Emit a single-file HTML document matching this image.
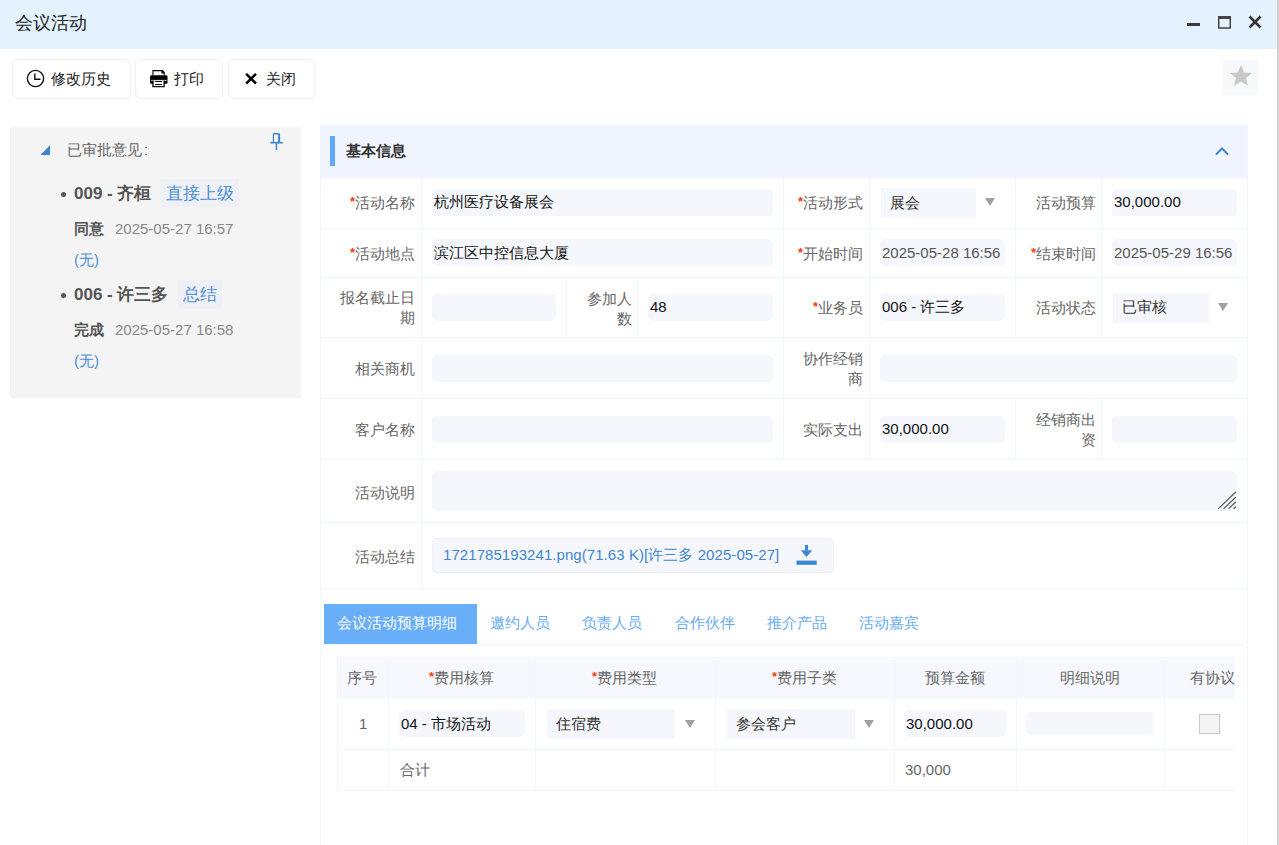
<!DOCTYPE html>
<html><head><meta charset="utf-8">
<style>
*{box-sizing:border-box;margin:0;padding:0}
html,body{width:1279px;height:845px;overflow:hidden;background:#fff;font-family:"Liberation Sans",sans-serif;color:#333;position:relative}
.a{position:absolute}
.tb{left:0;top:0;width:1279px;height:49px;background:#e3f2fe}
.ttl{left:15px;top:11px;font-size:18px;line-height:24px;color:#222}
.btn{top:59px;height:40px;border:1px solid #efefef;border-radius:6px;background:#fff}
.btxt{top:69px;font-size:15px;line-height:20px;color:#222}
.lp{left:10px;top:127px;width:291px;height:271px;background:#f4f4f5}
.lbl{font-size:15px;line-height:20px;color:#666;text-align:right;white-space:nowrap}
.req{color:#ff3a0a;font-size:13px;font-weight:bold;vertical-align:top;position:relative;top:0px;line-height:18px}
.inp{background:#f5f7fc;border-radius:5px;height:27px}
.val{font-size:15px;line-height:20px;color:#111;white-space:nowrap}
.hl{height:1px;background:#f1f5fd}
.vl{width:1px;background:#f1f5fd}
.sel{background:#f5f7fc;height:31px}
.tri{width:0;height:0;border-left:5px solid transparent;border-right:5px solid transparent;border-top:8px solid #a0a0a0}
.tab{top:604px;height:40px;font-size:15px;line-height:20px;color:#66acf5;padding-top:9px}
</style></head><body>
<!-- title bar -->
<div class="a tb"></div>
<div class="a ttl">会议活动</div>
<div class="a" style="left:1187px;top:23px;width:13px;height:3px;background:#3a3a3a"></div>
<svg class="a" style="left:1217px;top:15px" width="15" height="15" viewBox="0 0 15 15"><rect x="1.75" y="2" width="11.5" height="11" fill="none" stroke="#444" stroke-width="1.5"/><rect x="1" y="1" width="13" height="3" fill="#444"/></svg>
<svg class="a" style="left:1248px;top:15px" width="14" height="14" viewBox="0 0 14 14"><path d="M1.5 1.5L12.5 12.5M12.5 1.5L1.5 12.5" stroke="#333" stroke-width="2.6"/></svg>

<!-- toolbar -->
<div class="a btn" style="left:12px;width:119px"></div>
<svg class="a" style="left:26px;top:69px" width="19" height="19" viewBox="0 0 19 19"><circle cx="9.5" cy="9.5" r="8.1" fill="none" stroke="#111" stroke-width="1.4"/><path d="M8.8 4.5V10.3H14.5" fill="none" stroke="#111" stroke-width="1.4"/></svg>
<div class="a btxt" style="left:51px">修改历史</div>
<div class="a btn" style="left:135px;width:88px"></div>
<svg class="a" style="left:145px;top:66px" width="27" height="26" viewBox="0 0 27 26"><rect x="5.1" y="9.2" width="17.4" height="8.6" rx="1.3" fill="#000"/><rect x="6.2" y="13.9" width="15.3" height="0.9" fill="#fff"/><path d="M8 14.8V20.6H19.1V14.8Z" fill="#fff"/><path d="M8 14.6V20.6H19.1V14.6" fill="none" stroke="#000" stroke-width="1.3"/><path d="M10.2 15.5H16.9M10.2 18.5H16.9" stroke="#000" stroke-width="1"/><path d="M7.4 9.3V4.1H17.6L19.8 6.3V9.3H18.7V7.4H16.4V5.2H8.5V9.3Z" fill="#000"/></svg>
<div class="a btxt" style="left:174px">打印</div>
<div class="a btn" style="left:228px;width:87px"></div>
<svg class="a" style="left:244px;top:72px" width="14" height="13" viewBox="0 0 14 13"><path d="M2.2 1.8L12 11.5M12 1.8L2.2 11.5" stroke="#000" stroke-width="2.5"/></svg>
<div class="a btxt" style="left:266px">关闭</div>
<div class="a" style="left:1223px;top:60px;width:35px;height:35px;background:#f7f8fa"></div>
<svg class="a" style="left:1229px;top:64px" width="24" height="24" viewBox="0 0 24 24"><path d="M12 1l3.2 7.4 7.8.6-6 5.1 1.9 7.7L12 17.6l-6.9 4.2 1.9-7.7-6-5.1 7.8-.6z" fill="#c8c8c8"/></svg>

<!-- left panel -->
<div class="a lp"></div>
<div class="a tri" style="left:41px;top:146px;border:0;width:9px;height:9px;background:linear-gradient(135deg,transparent 50%,#3a86d0 50%)"></div>
<div class="a" style="left:67px;top:140px;font-size:15px;line-height:20px;color:#666">已审批意见<span style="margin-left:2px">:</span></div>
<svg class="a" style="left:269px;top:132px" width="15" height="20" viewBox="0 0 15 20"><path d="M3.8 10.2V2.6Q3.8 1.1 5.3 1.1H9.6Q11.1 1.1 11.1 2.6V10.2H9.1V2.6H5V10.2Z" fill="#3a86d0"/><rect x="1" y="9.9" width="13" height="1.5" rx=".7" fill="#3a86d0"/><rect x="6.7" y="10.5" width="1.5" height="7.8" rx=".7" fill="#3a86d0"/></svg>

<div class="a" style="left:61px;top:192px;width:5px;height:5px;border-radius:50%;background:#555"></div>
<div class="a" style="left:74px;top:184px;font-size:17px;line-height:20px;font-weight:bold;color:#555">009 - 齐桓</div>
<div class="a" style="left:160px;top:179px;width:79px;height:28px;background:#eef0f5;font-size:17px;line-height:29px;color:#4a8fd6;padding-left:6px">直接上级</div>
<div class="a" style="left:74px;top:219px;font-size:15px;line-height:20px;font-weight:bold;color:#555">同意</div>
<div class="a" style="left:115px;top:219px;font-size:15px;line-height:20px;color:#888">2025-05-27 16:57</div>
<div class="a" style="left:74px;top:250px;font-size:15px;line-height:20px;color:#4a8fd6">(无)</div>

<div class="a" style="left:61px;top:293px;width:5px;height:5px;border-radius:50%;background:#555"></div>
<div class="a" style="left:74px;top:285px;font-size:17px;line-height:20px;font-weight:bold;color:#555">006 - 许三多</div>
<div class="a" style="left:178px;top:280px;width:44px;height:29px;background:#eef0f5;font-size:17px;line-height:29px;color:#4a8fd6;padding-left:5px">总结</div>
<div class="a" style="left:74px;top:320px;font-size:15px;line-height:20px;font-weight:bold;color:#555">完成</div>
<div class="a" style="left:115px;top:320px;font-size:15px;line-height:20px;color:#888">2025-05-27 16:58</div>
<div class="a" style="left:74px;top:351px;font-size:15px;line-height:20px;color:#4a8fd6">(无)</div>

<!-- main panel -->
<div class="a" style="left:320px;top:125px;width:927px;height:53px;background:#eff4fe"></div>
<div class="a" style="left:330px;top:136px;width:5px;height:30px;background:#62a8f8"></div>
<div class="a" style="left:346px;top:141px;font-size:15px;line-height:20px;font-weight:bold;color:#333">基本信息</div>
<svg class="a" style="left:1214px;top:145px" width="16" height="12" viewBox="0 0 16 12"><path d="M2 9.5L8 3.5L14 9.5" stroke="#3a86d0" stroke-width="2" fill="none"/></svg>

<!-- grid lines -->
<div class="a vl" style="left:320px;top:177px;height:668px"></div>
<div class="a vl" style="left:1247px;top:125px;height:720px"></div>
<div class="a hl" style="left:320px;top:228px;width:927px"></div>
<div class="a hl" style="left:320px;top:277px;width:927px"></div>
<div class="a hl" style="left:320px;top:337px;width:927px"></div>
<div class="a hl" style="left:320px;top:398px;width:927px"></div>
<div class="a hl" style="left:320px;top:459px;width:927px"></div>
<div class="a hl" style="left:320px;top:522px;width:927px"></div>
<div class="a hl" style="left:320px;top:588px;width:927px"></div>
<div class="a vl" style="left:421px;top:177px;height:411px"></div>
<div class="a vl" style="left:783px;top:177px;height:282px"></div>
<div class="a vl" style="left:869px;top:177px;height:282px"></div>
<div class="a vl" style="left:1015px;top:177px;height:160px"></div>
<div class="a vl" style="left:1101px;top:177px;height:160px"></div>
<div class="a vl" style="left:1015px;top:398px;height:61px"></div>
<div class="a vl" style="left:1101px;top:398px;height:61px"></div>
<div class="a vl" style="left:566px;top:277px;height:60px"></div>
<div class="a vl" style="left:637px;top:277px;height:60px"></div>

<!-- row 1 -->
<div class="a lbl" style="right:864px;top:193px"><span class="req">*</span>活动名称</div>
<div class="a inp" style="left:432px;top:189px;width:341px"></div>
<div class="a val" style="left:434px;top:192px">杭州医疗设备展会</div>
<div class="a lbl" style="right:416px;top:193px"><span class="req">*</span>活动形式</div>
<div class="a sel" style="left:881px;top:188px;width:95px;height:30px"></div>
<div class="a val" style="left:890px;top:193px;color:#333">展会</div>
<div class="a tri" style="left:985px;top:198px"></div>
<div class="a lbl" style="right:183px;top:193px">活动预算</div>
<div class="a inp" style="left:1112px;top:189px;width:125px"></div>
<div class="a val" style="left:1114px;top:192px">30,000.00</div>

<!-- row 2 -->
<div class="a lbl" style="right:864px;top:244px"><span class="req">*</span>活动地点</div>
<div class="a inp" style="left:432px;top:239px;width:341px"></div>
<div class="a val" style="left:434px;top:243px">滨江区中控信息大厦</div>
<div class="a lbl" style="right:416px;top:244px"><span class="req">*</span>开始时间</div>
<div class="a inp" style="left:880px;top:239px;width:125px"></div>
<div class="a val" style="left:882px;top:243px;color:#555">2025-05-28 16:56</div>
<div class="a lbl" style="right:183px;top:244px"><span class="req">*</span>结束时间</div>
<div class="a inp" style="left:1112px;top:239px;width:125px"></div>
<div class="a val" style="left:1114px;top:243px;color:#555">2025-05-29 16:56</div>

<!-- row 3 -->
<div class="a lbl" style="right:864px;top:288px;width:76px;white-space:normal;line-height:20px">报名截止日期</div>
<div class="a inp" style="left:432px;top:294px;width:124px"></div>
<div class="a lbl" style="right:647px;top:289px;width:50px;white-space:normal;line-height:20px">参加人数</div>
<div class="a inp" style="left:648px;top:294px;width:125px"></div>
<div class="a val" style="left:650px;top:297px">48</div>
<div class="a lbl" style="right:416px;top:298px"><span class="req">*</span>业务员</div>
<div class="a inp" style="left:880px;top:294px;width:125px"></div>
<div class="a val" style="left:882px;top:297px">006 - 许三多</div>
<div class="a lbl" style="right:183px;top:298px">活动状态</div>
<div class="a sel" style="left:1113px;top:293px;width:96px;height:30px"></div>
<div class="a val" style="left:1122px;top:297px;color:#333">已审核</div>
<div class="a tri" style="left:1218px;top:303px"></div>

<!-- row 4 -->
<div class="a lbl" style="right:864px;top:359px">相关商机</div>
<div class="a inp" style="left:432px;top:355px;width:341px"></div>
<div class="a lbl" style="right:416px;top:349px;width:66px;white-space:normal;line-height:20px">协作经销商</div>
<div class="a inp" style="left:880px;top:355px;width:357px"></div>

<!-- row 5 -->
<div class="a lbl" style="right:864px;top:420px">客户名称</div>
<div class="a inp" style="left:432px;top:416px;width:341px"></div>
<div class="a lbl" style="right:416px;top:420px">实际支出</div>
<div class="a inp" style="left:880px;top:416px;width:125px"></div>
<div class="a val" style="left:882px;top:419px">30,000.00</div>
<div class="a lbl" style="right:183px;top:410px;width:66px;white-space:normal;line-height:20px">经销商出资</div>
<div class="a inp" style="left:1112px;top:416px;width:125px"></div>

<!-- row 6 -->
<div class="a lbl" style="right:864px;top:483px">活动说明</div>
<div class="a inp" style="left:432px;top:471px;width:805px;height:40px"></div>
<svg class="a" style="left:1205px;top:480px" width="40" height="40" viewBox="0 0 40 40"><path d="M13.7 28.4L30.5 12.3M18.9 28.4L30.5 17.5M23.9 28.4L30.5 22.2M28.9 28.4L30.5 27" stroke="#5a5a5a" stroke-width="1.3" stroke-linecap="round"/></svg>

<!-- row 7 -->
<div class="a lbl" style="right:864px;top:547px">活动总结</div>
<div class="a" style="left:432px;top:538px;width:402px;height:35px;background:#f5f7fc;border:1px solid #edf0f6;border-radius:5px"></div>
<div class="a val" style="left:443px;top:545px;color:#3f86d0;letter-spacing:0.065px">1721785193241.png(71.63 K)[许三多 2025-05-27]</div>
<svg class="a" style="left:780px;top:535px" width="40" height="35" viewBox="0 0 40 35"><rect x="25" y="9.9" width="3" height="5.6" fill="#3a86d0"/><path d="M20.8 15.2H32.2L26.5 22.1Z" fill="#3a86d0"/><rect x="16.5" y="25.6" width="20.2" height="4.2" fill="#3a86d0"/></svg>

<!-- tabs -->
<div class="a" style="left:324px;top:644px;width:920px;height:1px;background:#f0f3f9"></div>
<div class="a tab" style="left:324px;width:153px;background:#68aef9;color:#fff;padding-left:13px">会议活动预算明细</div>
<div class="a tab" style="left:490px">邀约人员</div>
<div class="a tab" style="left:582px">负责人员</div>
<div class="a tab" style="left:675px">合作伙伴</div>
<div class="a tab" style="left:767px">推介产品</div>
<div class="a tab" style="left:859px">活动嘉宾</div>

<!-- table -->
<div class="a" style="left:337px;top:657px;width:898px;height:42px;background:#f6f8fd"></div>
<div class="a hl" style="left:337px;top:749px;width:898px"></div>
<div class="a hl" style="left:337px;top:790px;width:898px"></div>
<div class="a vl" style="left:337px;top:657px;height:134px"></div>
<div class="a vl" style="left:388px;top:657px;height:134px"></div>
<div class="a vl" style="left:535px;top:657px;height:134px"></div>
<div class="a vl" style="left:715px;top:657px;height:134px"></div>
<div class="a vl" style="left:894px;top:657px;height:134px"></div>
<div class="a vl" style="left:1016px;top:657px;height:134px"></div>
<div class="a vl" style="left:1164px;top:657px;height:134px"></div>

<div class="a lbl" style="left:347px;top:668px">序号</div>
<div class="a lbl" style="left:429px;top:668px"><span class="req">*</span>费用核算</div>
<div class="a lbl" style="left:592px;top:668px"><span class="req">*</span>费用类型</div>
<div class="a lbl" style="left:772px;top:668px"><span class="req">*</span>费用子类</div>
<div class="a lbl" style="left:925px;top:668px">预算金额</div>
<div class="a lbl" style="left:1060px;top:668px">明细说明</div>
<div class="a lbl" style="left:1190px;top:668px;width:45px;overflow:hidden">有协议</div>

<div class="a lbl" style="left:359px;top:714px">1</div>
<div class="a inp" style="left:399px;top:710px;width:126px"></div>
<div class="a val" style="left:401px;top:714px">04 - 市场活动</div>
<div class="a sel" style="left:547px;top:709px;width:128px;height:30px"></div>
<div class="a val" style="left:556px;top:714px;color:#333">住宿费</div>
<div class="a tri" style="left:685px;top:720px"></div>
<div class="a sel" style="left:727px;top:709px;width:128px;height:30px"></div>
<div class="a val" style="left:736px;top:714px;color:#333">参会客户</div>
<div class="a tri" style="left:864px;top:720px"></div>
<div class="a inp" style="left:904px;top:710px;width:102px"></div>
<div class="a val" style="left:906px;top:714px">30,000.00</div>
<div class="a inp" style="left:1026px;top:712px;width:127px;height:23px"></div>
<div class="a" style="left:1199px;top:714px;width:21px;height:20px;background:#f4f4f4;border:1px solid #c9c9c9"></div>

<div class="a lbl" style="left:400px;top:760px">合计</div>
<div class="a lbl" style="left:905px;top:760px">30,000</div>

<div class="a" style="left:1277px;top:0;width:2px;height:845px;background:#d0d0d0"></div>
</body></html>
